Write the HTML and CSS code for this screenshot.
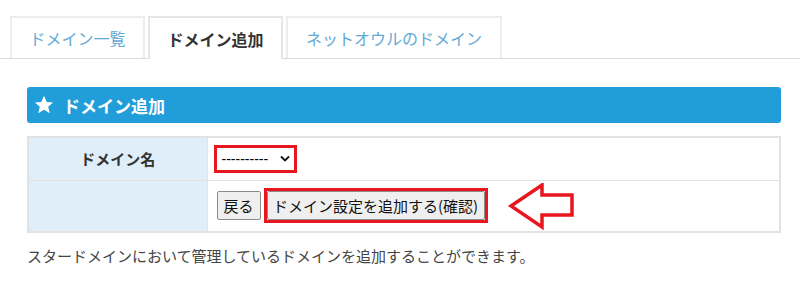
FILE: index.html
```html
<!DOCTYPE html>
<html lang="ja">
<head>
<meta charset="utf-8">
<link rel="stylesheet" href="styles.css">
</head>
<body>
<div class="tabs">
  <div class="tab">ドメイン一覧</div>
  <div class="tab active">ドメイン追加</div>
  <div class="tab wide">ネットオウルのドメイン</div>
</div>
<div class="content">
  <div class="heading">
    <svg class="star" viewBox="0 0 24 24" width="20" height="20"><path d="M12 1l3.2 7.3 7.8.6-6 5.1 1.9 7.8L12 17.6l-6.9 4.2L7 14l-6-5.1 7.8-.6z" fill="#fff"/></svg>
    <span>ドメイン追加</span>
  </div>
  <table class="form">
    <tr class="row1">
      <th>ドメイン名</th>
      <td>
        <div class="redbox sel">
          <span class="dashes">----------</span>
          <svg class="chev" viewBox="0 0 10 6" width="10" height="7"><path d="M1 1l4 4 4-4" fill="none" stroke="#111" stroke-width="1.8"/></svg>
        </div>
      </td>
    </tr>
    <tr class="row2">
      <th></th>
      <td>
        <div class="actions">
          <button class="btn back">戻る</button>
          <div class="redbox"><button class="btn">ドメイン設定を追加する(確認)</button></div>
          <svg class="arrow" width="68" height="48" viewBox="0 0 68 48"><polygon points="3,23 34,2 34,12 64,12 64,32 34,32 34,44" fill="none" stroke="#e8161e" stroke-width="3.5" stroke-linejoin="miter"/></svg>
        </div>
      </td>
    </tr>
  </table>
  <p class="note">スタードメインにおいて管理しているドメインを追加することができます。</p>
</div>
</body>
</html>
```
FILE: styles.css
```css
* { box-sizing: border-box; }
body {
  margin: 0;
  background: #fff;
  font-family: "Noto Sans CJK JP", "Noto Sans", sans-serif;
  color: #333;
}
.tabs {
  display: flex;
  gap: 3px;
  margin-top: 16px;
  padding-left: 10px;
  height: 43px;
  border-bottom: 1px solid #dcdcdc;
}
.tab {
  width: 135px;
  height: 42px;
  border: 2px solid #ededed;
  border-bottom: none;
  display: flex;
  align-items: center;
  justify-content: center;
  font-size: 16px;
  color: #62a9d5;
  background: #fff;
}
.tab.wide { width: 216px; }
.tab.active {
  height: 43px;
  color: #333;
  font-weight: bold;
  border-color: #e6e6e6;
}
.content {
  padding: 0 19px 0 27px;
}
.heading {
  margin-top: 28px;
  height: 36px;
  background: #219ed9;
  border-radius: 3px;
  display: flex;
  align-items: center;
  padding-left: 7px;
  color: #fff;
  font-size: 17px;
  font-weight: bold;
}
.star { margin-right: 9px; }
.form {
  margin-top: 13px;
  width: 754px;
  border-collapse: collapse;
  border: 2px solid #e2e2e2;
}
.form th, .form td {
  border: 1px solid #e2e2e2;
  padding: 0;
}
.form th {
  width: 179px;
  background: #dfeef9;
  font-size: 15px;
  font-weight: bold;
  color: #333;
  text-align: center;
}
.form td { padding-left: 6px; }
.row1 { height: 43px; }
.row2 { height: 49px; }
.redbox {
  display: inline-flex;
  align-items: center;
  border: 3px solid #e8161e;
}
.sel {
  width: 83px;
  height: 28px;
  padding: 0 4px 0 5px;
  justify-content: space-between;
  background: #fff;
  font-size: 14px;
  color: #000;
}
.dashes { font-family: "Liberation Sans", sans-serif; letter-spacing: 0; }
.actions {
  display: flex;
  align-items: center;
  padding-left: 3px;
}
.btn {
  font-family: "Noto Sans CJK JP", sans-serif;
  font-size: 15px;
  color: #111;
  background: #efefef;
  border: 1px solid #8a8a8a;
  border-radius: 2px;
  height: 29px;
  padding: 0 6px;
  line-height: 1;
  margin: 0;
}
.back { width: 44px; padding: 0; margin-right: 3px; }
.redbox .btn { width: 218px; padding: 0; }
.arrow { margin-left: 20px; margin-top: 2px; }
.note {
  margin: 12px 0 0;
  font-size: 15px;
  color: #444;
}
```
